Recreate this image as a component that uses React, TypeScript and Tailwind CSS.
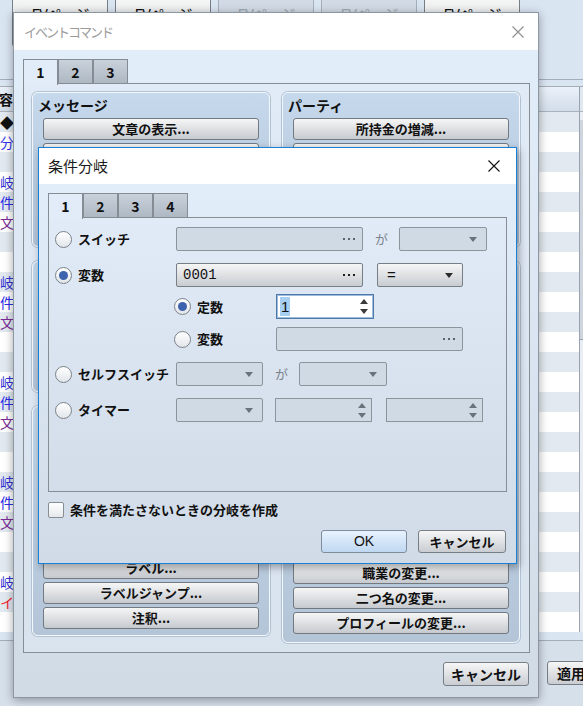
import React from 'react';

// small drawing helpers
function DownTri({ className }: { className: string }) {
  return (
    <svg width="8" height="5" viewBox="0 0 8 5" className={className}>
      <path d="M0 0h8L4 5z" />
    </svg>
  );
}

function UpTri({ className }: { className: string }) {
  return (
    <svg width="8" height="5" viewBox="0 0 8 5" className={className}>
      <path d="M0 5h8L4 0z" />
    </svg>
  );
}

function Dots({ className }: { className: string }) {
  return (
    <svg width="12" height="2" viewBox="0 0 12 2" className={className}>
      <rect x="0" y="0" width="2" height="2" />
      <rect x="5" y="0" width="2" height="2" />
      <rect x="10" y="0" width="2" height="2" />
    </svg>
  );
}

function CloseX({ className }: { className: string }) {
  return (
    <svg width="12" height="12" viewBox="0 0 12 12" className={className}>
      <path d="M0.5 0.5L11.5 11.5M11.5 0.5L0.5 11.5" stroke="currentColor" strokeWidth="1.1" fill="none" />
    </svg>
  );
}

function Radio({ checked }: { checked?: boolean }) {
  return (
    <span className="w-[17px] h-[17px] shrink-0 rounded-full border border-[#7b828a] bg-gradient-to-b from-[#ffffff] to-[#e2e6ea] flex items-center justify-center">
      {checked && <span className="w-[9px] h-[9px] rounded-full bg-[#3d62ae]" />}
    </span>
  );
}

function Picker({ className, value, enabled }: { className: string; value?: string; enabled?: boolean }) {
  return (
    <div
      className={`h-[24px] shrink-0 flex items-center justify-between pl-[6px] pr-[7px] rounded-[2px] border ${
        enabled ? 'border-[#787e86] bg-gradient-to-b from-[#f6f6f6] to-[#c8ccd1]' : 'border-[#8d949c] bg-[#d0dae4]'
      } ${className}`}
    >
      <span className="font-['Liberation_Mono',monospace] text-[14px] font-normal text-[#111]">{value}</span>
      <Dots className={enabled ? 'fill-[#1e1e1e]' : 'fill-[#5c636b]'} />
    </div>
  );
}

function Combo({ className, value, enabled }: { className: string; value?: string; enabled?: boolean }) {
  return (
    <div
      className={`h-[24px] shrink-0 flex items-center justify-between pl-[9px] pr-[9px] rounded-[2px] border ${
        enabled ? 'border-[#787e86] bg-gradient-to-b from-[#f6f6f6] to-[#c8ccd1]' : 'border-[#8d949c] bg-[#d0dae4]'
      } ${className}`}
    >
      <span className="font-['Liberation_Sans',sans-serif] text-[15px] font-normal text-[#111]">{value}</span>
      <DownTri className={enabled ? 'fill-[#2b2b2b]' : 'fill-[#6a727a]'} />
    </div>
  );
}

function Spin({ className, value, enabled }: { className: string; value?: string; enabled?: boolean }) {
  return (
    <div
      className={`shrink-0 flex items-center justify-between pr-[5px] ${
        enabled
          ? 'h-[25px] pl-[3px] border border-[#4e7aab] shadow-[inset_0_0_0_1px_#9dbbdc] bg-white'
          : 'h-[24px] pl-[4px] border border-[#8d949c] bg-[#d0dae4]'
      } ${className}`}
    >
      {value ? (
        <span className="bg-[#a7cff2] leading-[19px] px-[1px] font-['Liberation_Sans',sans-serif] text-[15px] font-normal text-[#111]">{value}</span>
      ) : (
        <span />
      )}
      <div className="flex flex-col gap-[5px]">
        <UpTri className={enabled ? 'fill-[#3a3a3a]' : 'fill-[#6a727a]'} />
        <DownTri className={enabled ? 'fill-[#3a3a3a]' : 'fill-[#6a727a]'} />
      </div>
    </div>
  );
}

function Ga() {
  return <span className="w-[12px] mx-[12px] text-[13px] font-normal text-[#7d838b]">が</span>;
}

// ---------- background event editor ----------
const PAGE_BUTTONS = [false, false, true, true, false];

// only the first column of the list is visible beside the dialog
const GROUP = [
  { t: '岐', c: 'text-[#3232d4]' },
  { t: '件', c: 'text-[#2a2ae6]' },
  { t: '文', c: 'text-[#7a2b95]' },
  { t: '', c: '' },
  { t: '', c: '' },
];

const LIST_ROWS = [
  { t: '◆', c: 'text-[#111]' },
  { t: '分', c: 'text-[#3434e6]' },
  { t: '', c: '' },
  ...GROUP,
  ...GROUP,
  ...GROUP,
  ...GROUP,
  { t: '岐', c: 'text-[#3232d4]' },
  { t: 'イ', c: 'text-[#f0242c]' },
  { t: '', c: '' },
];

function BackWindow() {
  return (
    <div className="absolute inset-0 flex flex-col bg-[#dae5f2]">
      <div className="h-[80px] shrink-0 flex items-start gap-[7px] pl-[12px] border-b border-[#a5aeb8]">
        {PAGE_BUTTONS.map((off, i) => (
          <div
            key={i}
            className={`-mt-[4px] h-[51px] w-[96px] shrink-0 rounded-[3px] border flex flex-col items-center pt-[7px] leading-[20px] text-[15px] tracking-[-1px] ${
              off
                ? 'border-[#a6afb9] bg-[#d2dbe5] text-[#a0a8b1]'
                : 'border-[#787e86] bg-gradient-to-b from-[#f7f7f7] to-[#d3d7dc] text-[#111]'
            }`}
          >
            <span>EVページ</span>
          </div>
        ))}
      </div>

      <div className="mt-[6px] flex border-t border-[#a5aeb8]">
        <div className="flex-1 flex flex-col">
          <div className="h-[25px] border-b border-[#aab3bd] bg-gradient-to-b from-[#eaf1f9] to-[#d2dde9] flex items-center text-[14px] font-bold">
            <span className="-ml-[1px]">容</span>
          </div>
          {LIST_ROWS.map((r, i) => (
            <div
              key={i}
              className={`h-[20px] leading-[20px] text-[14px] whitespace-nowrap ${i % 2 === 0 ? 'bg-[#e3e9f0]' : 'bg-white'} ${r.c}`}
            >
              {r.t}
            </div>
          ))}
        </div>
        <div className="w-[4px] border-l border-[#9aa3ad] bg-[#e9eef4] flex flex-col">
          <div className="h-[25px] border-b border-[#aab3bd] bg-[#dfe7f1]" />
          <div className="mt-[8px] h-[220px] border-b border-[#9aa3ad] bg-[#cdd5de]" />
        </div>
      </div>

      <div className="mt-[8px] flex-1 border-t border-[#a5aeb8] bg-[#d6e0eb] flex gap-[8px] pl-[359px] pt-[20px]">
        <div className="w-[86px] h-[24px] shrink-0 rounded-[3px] border border-[#787e86] bg-gradient-to-b from-[#f6f6f6] to-[#c9cdd2]" />
        <div className="w-[86px] h-[24px] shrink-0 rounded-[3px] border border-[#787e86] bg-gradient-to-b from-[#f6f6f6] to-[#c9cdd2]" />
        <div className="w-[86px] h-[24px] shrink-0 rounded-[3px] border border-[#787e86] bg-gradient-to-b from-[#f6f6f6] to-[#c9cdd2] pl-[9px] text-[14px] leading-[22px] font-bold">適用</div>
      </div>
    </div>
  );
}

// ---------- event command dialog ----------
function CmdButton({ label }: { label: string }) {
  return (
    <div className="h-[22px] shrink-0 rounded-[3px] border border-[#737980] bg-gradient-to-b from-[#f6f6f6] to-[#c6cacf] text-center text-[13px] font-bold leading-[20px] text-[#111] whitespace-nowrap overflow-hidden">
      {label}
    </div>
  );
}

// labels of buttons that sit under the front dialog are left blank
function Group({ title, items, className }: { title: string; items: string[]; className: string }) {
  return (
    <div
      className={`rounded-[6px] border border-[#f2f7fc] shadow-[0_0_0_1px_#b3c2d2] bg-gradient-to-b from-[#c5d8ec] to-[#b4c5d8] px-[10px] flex flex-col ${className}`}
    >
      <div className="h-[25px] shrink-0 flex items-center -ml-[5px] text-[14px] font-bold text-[#111]">{title}</div>
      <div className="flex flex-col gap-[3px]">
        {items.map((it, i) => (
          <CmdButton key={i} label={it} />
        ))}
      </div>
    </div>
  );
}

function EventCommandDialog() {
  return (
    <div className="absolute left-[13px] top-[12px] w-[526px] h-[686px] border border-[#8c97a2] shadow-[0_2px_9px_rgba(0,0,0,0.35)] flex flex-col">
      <div className="h-[37px] shrink-0 bg-white flex items-center justify-between pl-[10px] pr-[14px]">
        <span className="text-[13px] tracking-[-2px] text-[#9b9b9b]">イベントコマンド</span>
        <CloseX className="text-[#8e8e8e]" />
      </div>
      <div className="flex-1 flex flex-col bg-gradient-to-b from-[#e2edfa] to-[#d1dbe6] pt-[9px] pl-[9px] pr-[8px]">
        <div className="flex h-[25px] relative z-10">
          <div className="w-[35px] h-[26px] border border-b-0 border-[#858c94] bg-[#e2ecf8] text-center text-[14px] font-bold leading-[24px]">1</div>
          <div className="w-[35px] h-[25px] border border-[#858c94] bg-gradient-to-b from-[#c9d2db] to-[#aeb8c3] text-center text-[14px] font-bold leading-[24px]">2</div>
          <div className="w-[35px] h-[25px] border border-[#858c94] bg-gradient-to-b from-[#c9d2db] to-[#aeb8c3] text-center text-[14px] font-bold leading-[24px]">3</div>
        </div>
        <div className="h-[570px] -mt-px border border-[#868d95] bg-gradient-to-b from-[#e1ebf8] to-[#d9e3ee] flex gap-[12px] pl-[8px] pt-[8px]">
          <div className="w-[238px] flex flex-col gap-[14px]">
            <Group title="メッセージ" className="h-[155px]" items={['文章の表示...', '', '', '', '']} />
            <Group title="" className="h-[131px]" items={['', '', '', '']} />
            <Group title="" className="h-[230px]" items={['', '', '', '', '', 'ラベル...', 'ラベルジャンプ...', '注釈...']} />
          </div>
          <div className="w-[238px] flex flex-col gap-[14px]">
            <Group title="パーティ" className="h-[155px]" items={['所持金の増減...', '', '', '', '']} />
            <Group
              title=""
              className="h-[382px]"
              items={['', '', '', '', '', '', '', '', '', '', '', '職業の変更...', '二つ名の変更...', 'プロフィールの変更...']}
            />
          </div>
        </div>
        <div className="flex justify-end pr-[1px] mt-[9px]">
          <div className="w-[86px] h-[24px] rounded-[3px] border border-[#787e86] bg-gradient-to-b from-[#f6f6f6] to-[#c9cdd2] text-center text-[14px] font-bold leading-[22px]">
            キャンセル
          </div>
        </div>
      </div>
    </div>
  );
}

// ---------- conditional branch dialog ----------
function ConditionDialog() {
  return (
    <div className="absolute left-[38px] top-[147px] w-[479px] h-[417px] border border-[#1a80d6] shadow-[2px_3px_8px_rgba(0,0,0,0.35)] flex flex-col">
      <div className="h-[36px] shrink-0 bg-white flex items-center justify-between pl-[9px] pr-[16px]">
        <span className="text-[15px] text-[#1b1b1b]">条件分岐</span>
        <CloseX className="text-[#111]" />
      </div>
      <div className="flex-1 flex flex-col bg-gradient-to-b from-[#e2edfa] to-[#d0dbe7] pt-[9px] pl-[9px] pr-[9px]">
        <div className="flex h-[25px] relative z-10">
          <div className="w-[35px] h-[26px] border border-b-0 border-[#858c94] bg-[#e2ecf8] text-center text-[14px] font-bold leading-[24px]">1</div>
          <div className="w-[35px] h-[25px] border border-[#858c94] bg-gradient-to-b from-[#c9d2db] to-[#aeb8c3] text-center text-[14px] font-bold leading-[24px]">2</div>
          <div className="w-[35px] h-[25px] border border-[#858c94] bg-gradient-to-b from-[#c9d2db] to-[#aeb8c3] text-center text-[14px] font-bold leading-[24px]">3</div>
          <div className="w-[35px] h-[25px] border border-[#858c94] bg-gradient-to-b from-[#c9d2db] to-[#aeb8c3] text-center text-[14px] font-bold leading-[24px]">4</div>
        </div>
        <div className="h-[275px] -mt-px border border-[#868d95] bg-gradient-to-b from-[#e1ebf8] to-[#d2dde9] flex flex-col pt-[9px] text-[13px] font-bold text-[#111]">
          {/* switch */}
          <div className="flex items-center h-[24px]">
            <div className="w-[127px] flex items-center gap-[6px] pl-[6px]">
              <Radio />
              <span>スイッチ</span>
            </div>
            <Picker className="w-[187px]" />
            <Ga />
            <Combo className="w-[88px]" />
          </div>
          {/* variable */}
          <div className="flex items-center h-[24px] mt-[12px]">
            <div className="w-[127px] flex items-center gap-[6px] pl-[6px]">
              <Radio checked />
              <span>変数</span>
            </div>
            <Picker className="w-[187px]" value="0001" enabled />
            <Combo className="w-[86px] ml-[14px]" value="=" enabled />
          </div>
          <div className="flex items-center h-[25px] mt-[7px]">
            <div className="w-[227px] flex items-center gap-[6px] pl-[125px]">
              <Radio checked />
              <span>定数</span>
            </div>
            <Spin className="w-[98px]" value="1" enabled />
          </div>
          <div className="flex items-center h-[24px] mt-[8px]">
            <div className="w-[227px] flex items-center gap-[6px] pl-[125px]">
              <Radio />
              <span>変数</span>
            </div>
            <Picker className="w-[187px]" />
          </div>
          {/* self switch */}
          <div className="flex items-center h-[24px] mt-[11px]">
            <div className="w-[127px] flex items-center gap-[6px] pl-[6px]">
              <Radio />
              <span>セルフスイッチ</span>
            </div>
            <Combo className="w-[87px]" />
            <Ga />
            <Combo className="w-[88px]" />
          </div>
          {/* timer */}
          <div className="flex items-center h-[24px] mt-[12px]">
            <div className="w-[127px] flex items-center gap-[6px] pl-[6px]">
              <Radio />
              <span>タイマー</span>
            </div>
            <Combo className="w-[87px]" />
            <Spin className="w-[97px] ml-[12px]" />
            <Spin className="w-[97px] ml-[14px]" />
          </div>
        </div>
        <div className="flex items-center gap-[6px] mt-[10px] h-[16px] text-[13px] font-bold text-[#111]">
          <span className="w-[16px] h-[16px] rounded-[2px] border border-[#878e96] bg-gradient-to-b from-[#ffffff] to-[#e6e9ec]" />
          <span>条件を満たさないときの分岐を作成</span>
        </div>
        <div className="flex justify-end gap-[11px] pr-[1px] mt-[12px]">
          <div className="w-[86px] h-[23px] rounded-[3px] border border-[#7e8d9c] bg-gradient-to-b from-[#e8f2fd] to-[#bfd8f2] text-center font-['Liberation_Sans',sans-serif] text-[14px] leading-[21px] text-[#111]">
            OK
          </div>
          <div className="w-[88px] h-[23px] rounded-[3px] border border-[#787e86] bg-gradient-to-b from-[#f6f6f6] to-[#c9cdd2] text-center text-[13px] font-bold leading-[21px] text-[#111]">
            キャンセル
          </div>
        </div>
      </div>
    </div>
  );
}

export default function App() {
  return (
    <div className="relative w-[583px] h-[706px] overflow-hidden bg-[#dae5f2] font-['Noto_Sans_CJK_JP','Liberation_Sans',sans-serif] text-[#111]">
      <BackWindow />
      <EventCommandDialog />
      <ConditionDialog />
    </div>
  );
}
